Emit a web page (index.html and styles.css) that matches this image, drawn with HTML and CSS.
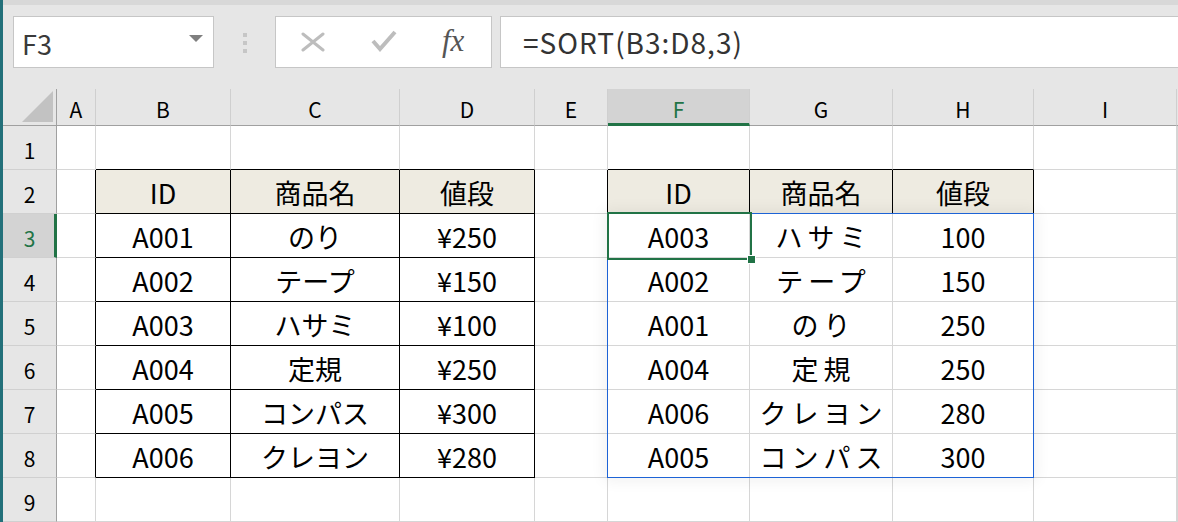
FILE: index.html
```html
<!DOCTYPE html>
<html lang="ja">
<head>
<meta charset="utf-8">
<link rel="stylesheet" href="styles.css">
</head>
<body>
<div class="app">
  <div class="toolbar">
    <div class="namebox"><span class="nb-text">F3</span><svg class="dd" width="14" height="8" viewBox="0 0 14 8"><polygon points="0,0 14,0 7,7" fill="#7f7f7f"/></svg></div>
    <div class="grip"><i></i><i></i><i></i></div>
    <div class="btnbox">
      <svg class="ic-x" width="24" height="20" viewBox="0 0 24 20"><path d="M2 2 L22 18 M22 2 L2 18" stroke="#bdbdbd" stroke-width="3" fill="none" stroke-linecap="round"/></svg>
      <svg class="ic-ok" width="26" height="22" viewBox="0 0 26 22"><path d="M2 11 L9 19 L24 2" stroke="#bdbdbd" stroke-width="4" fill="none"/></svg>
      <span class="fx">fx</span>
    </div>
    <div class="formula">=SORT(B3:D8,3)</div>
  </div>
  <div class="sheet">
    <div class="row">
      <div class="corner"><svg width="31" height="31" viewBox="0 0 31 31"><polygon points="0,31 31,0 31,31" fill="#c2c2c2"/></svg></div>
      <div class="ch">A</div><div class="ch">B</div><div class="ch">C</div><div class="ch">D</div><div class="ch">E</div><div class="ch sel">F</div><div class="ch">G</div><div class="ch">H</div><div class="ch">I</div><div class="ch last"></div>
    </div>
    <div class="row">
      <div class="rh">1</div>
      <div class="c"></div><div class="c bb"></div><div class="c bb"></div><div class="c bb"></div><div class="c"></div><div class="c bb"></div><div class="c bb"></div><div class="c bb"></div><div class="c"></div><div class="c"></div>
    </div>
    <div class="row">
      <div class="rh">2</div>
      <div class="c br"></div><div class="c t th">ID</div><div class="c t th">商品名</div><div class="c t th">値段</div><div class="c br"></div><div class="c t th">ID</div><div class="c t th">商品名</div><div class="c t th">値段</div><div class="c"></div><div class="c"></div>
    </div>
    <div class="row">
      <div class="rh on">3</div>
      <div class="c br"></div><div class="c t">A001</div><div class="c t">のり</div><div class="c t">¥250</div><div class="c"></div><div class="c">A003</div><div class="c jp">ハサミ</div><div class="c">100</div><div class="c"></div><div class="c"></div>
    </div>
    <div class="row">
      <div class="rh">4</div>
      <div class="c br"></div><div class="c t">A002</div><div class="c t">テープ</div><div class="c t">¥150</div><div class="c"></div><div class="c">A002</div><div class="c jp">テープ</div><div class="c">150</div><div class="c"></div><div class="c"></div>
    </div>
    <div class="row">
      <div class="rh">5</div>
      <div class="c br"></div><div class="c t">A003</div><div class="c t">ハサミ</div><div class="c t">¥100</div><div class="c"></div><div class="c">A001</div><div class="c jp">のり</div><div class="c">250</div><div class="c"></div><div class="c"></div>
    </div>
    <div class="row">
      <div class="rh">6</div>
      <div class="c br"></div><div class="c t">A004</div><div class="c t">定規</div><div class="c t">¥250</div><div class="c"></div><div class="c">A004</div><div class="c jp">定規</div><div class="c">250</div><div class="c"></div><div class="c"></div>
    </div>
    <div class="row">
      <div class="rh">7</div>
      <div class="c br"></div><div class="c t">A005</div><div class="c t">コンパス</div><div class="c t">¥300</div><div class="c"></div><div class="c">A006</div><div class="c jp">クレヨン</div><div class="c">280</div><div class="c"></div><div class="c"></div>
    </div>
    <div class="row">
      <div class="rh">8</div>
      <div class="c br"></div><div class="c t">A006</div><div class="c t">クレヨン</div><div class="c t">¥280</div><div class="c"></div><div class="c">A005</div><div class="c jp">コンパス</div><div class="c">300</div><div class="c"></div><div class="c"></div>
    </div>
    <div class="row">
      <div class="rh">9</div>
      <div class="c"></div><div class="c"></div><div class="c"></div><div class="c"></div><div class="c"></div><div class="c"></div><div class="c"></div><div class="c"></div><div class="c"></div><div class="c"></div>
    </div>
    <div class="spill"></div>
    <div class="active"><span class="handle"></span></div>
  </div>
</div>
</body>
</html>
```

FILE: styles.css
```css
html, body {
  margin: 0;
  padding: 0;
  background: #ffffff;
}
.app {
  width: 1178px;
  height: 522px;
  overflow: hidden;
  box-sizing: border-box;
  border-left: 3px solid #23707a;
  font-family: "Noto Sans CJK JP", "Noto Sans", sans-serif;
  color: #000;
}
.toolbar {
  box-sizing: border-box;
  height: 89px;
  background: #e6e6e6;
  border-top: 5px solid #d8d8d8;
  display: flex;
  align-items: flex-start;
  padding: 11px 0 0 10px;
}
.namebox {
  box-sizing: border-box;
  width: 201px;
  height: 52px;
  background: #fff;
  border: 1px solid #c6c6c6;
  display: flex;
  align-items: center;
  padding-left: 8px;
  font-size: 27px;
  color: #3a3a3a;
}
.nb-text { line-height: 1; padding-top: 2px; }
.dd { margin-left: auto; margin-right: 10px; margin-top: -6px; }
.grip {
  margin-left: 29px;
  margin-top: 17px;
  width: 4px;
  display: flex;
  flex-direction: column;
  gap: 4px;
}
.grip i {
  display: block;
  width: 4px;
  height: 4px;
  background: #c6c6c6;
}
.btnbox {
  box-sizing: border-box;
  margin-left: 28px;
  width: 217px;
  height: 52px;
  background: #fff;
  border: 1px solid #c6c6c6;
  display: flex;
  align-items: center;
}
.ic-x { margin-left: 25px; }
.ic-ok { margin-left: 46px; margin-top: -2px; }
.fx {
  margin-left: 45px;
  font-family: "Liberation Serif", "DejaVu Serif", serif;
  font-style: italic;
  font-size: 31px;
  color: #555;
  line-height: 1;
  margin-top: -4px;
}
.formula {
  box-sizing: border-box;
  margin-left: 8px;
  flex: 1;
  height: 52px;
  background: #fff;
  border: 1px solid #c6c6c6;
  border-right: none;
  display: flex;
  align-items: center;
  padding-left: 22px;
  font-size: 28px;
  letter-spacing: 1px;
  color: #333;
}

.sheet {
  display: grid;
  grid-template-columns: 54px 39px 135px 169px 135px 73px 142px 143px 141px 143px 1fr;
  grid-template-rows: 37px repeat(9, 44px);
}
.row { display: contents; }
.row > div { box-sizing: border-box; }
.row:nth-child(1) > div { grid-row: 1; }
.row:nth-child(2) > div { grid-row: 2; }
.row:nth-child(3) > div { grid-row: 3; }
.row:nth-child(4) > div { grid-row: 4; }
.row:nth-child(5) > div { grid-row: 5; }
.row:nth-child(6) > div { grid-row: 6; }
.row:nth-child(7) > div { grid-row: 7; }
.row:nth-child(8) > div { grid-row: 8; }
.row:nth-child(9) > div { grid-row: 9; }
.row:nth-child(10) > div { grid-row: 10; }
.row > div:nth-child(1) { grid-column: 1; }
.row > div:nth-child(2) { grid-column: 2; }
.row > div:nth-child(3) { grid-column: 3; }
.row > div:nth-child(4) { grid-column: 4; }
.row > div:nth-child(5) { grid-column: 5; }
.row > div:nth-child(6) { grid-column: 6; }
.row > div:nth-child(7) { grid-column: 7; }
.row > div:nth-child(8) { grid-column: 8; }
.row > div:nth-child(9) { grid-column: 9; }
.row > div:nth-child(10) { grid-column: 10; }
.row > div:nth-child(11) { grid-column: 11; }

.corner {
  background: #e6e6e6;
  border-right: 1px solid #a0a0a0;
  border-bottom: 1px solid #a0a0a0;
  display: flex;
  align-items: flex-end;
  justify-content: flex-end;
  padding: 0 3px 3px 0;
}
.corner svg { display: block; }
.ch {
  background: #e6e6e6;
  border-right: 1px solid #cfcfcf;
  border-bottom: 1px solid #a0a0a0;
  display: flex;
  align-items: center;
  justify-content: center;
  font-size: 21px;
  padding-top: 3px;
}
.ch.sel {
  background: #d3d3d3;
  color: #217346;
  border-bottom: 3px solid #217346;
  padding-top: 5px;
}
.ch.last { border-right: none; }
.rh {
  background: #e6e6e6;
  border-right: 1px solid #a0a0a0;
  border-bottom: 1px solid #d0d0d0;
  display: flex;
  align-items: center;
  justify-content: center;
  font-size: 21px;
  padding-top: 4px;
}
.rh.on {
  background: #d3d3d3;
  color: #217346;
  border-right: 3px solid #217346;
  padding-left: 2px;
}
.c {
  border-right: 1px solid #d6d6d6;
  border-bottom: 1px solid #d6d6d6;
  display: flex;
  align-items: center;
  justify-content: center;
  font-size: 27px;
  padding-top: 2px;
  white-space: nowrap;
}
.c.bb { border-bottom-color: #000; }
.c.br { border-right-color: #000; }
.c.t { border-right-color: #000; border-bottom-color: #000; }
.c.th { background: #eeebe1; }
.c.jp { letter-spacing: 5px; padding-left: 5px; }

.spill {
  grid-column: 7 / 10;
  grid-row: 4 / 10;
  margin: -1px 0 0 -1px;
  border: 1px solid #1d63d6;
  box-shadow: 0 0 14px 3px rgba(0, 0, 0, 0.06);
  pointer-events: none;
  z-index: 1;
}
.active {
  grid-column: 7 / 8;
  grid-row: 4 / 5;
  margin: -2px -2px -2px -1px;
  border: 2px solid #217346;
  position: relative;
  pointer-events: none;
  z-index: 2;
}
.handle {
  position: absolute;
  right: -6px;
  bottom: -6px;
  width: 7px;
  height: 7px;
  background: #217346;
  border: 1px solid #fff;
}
```
